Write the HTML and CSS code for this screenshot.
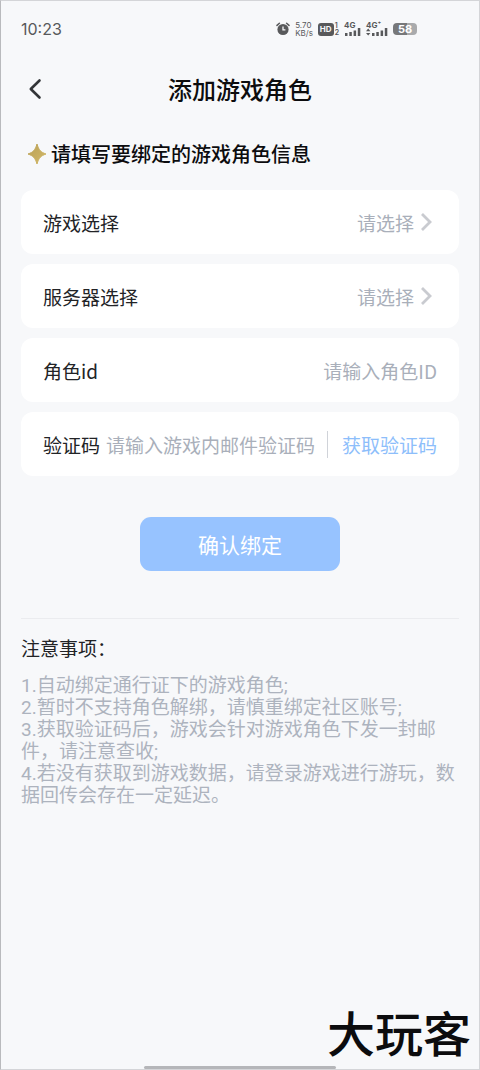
FILE: index.html
```html
<!DOCTYPE html>
<html lang="zh-CN">
<head>
<meta charset="utf-8">
<meta name="viewport" content="width=device-width, initial-scale=1">
<title>添加游戏角色</title>
<link rel="stylesheet" href="styles.css">
</head>
<body>
<div class="screen">
  <div class="status">
    <time class="clock">10:23</time>
    <div class="indicators">
      <svg class="alarm" width="14" height="14" viewBox="0 0 14 14" aria-hidden="true">
        <circle cx="7" cy="7.5" r="5.6" fill="#58595b"/>
        <path d="M1 3.4 3.4 1.2M13 3.4 10.6 1.2" stroke="#58595b" stroke-width="1.5" stroke-linecap="round"/>
        <path d="M7 4.6v3.2h2.4" fill="none" stroke="#f7f8fa" stroke-width="1.3"/>
      </svg>
      <div class="speed"><span>5.70</span><span>KB/s</span></div>
      <div class="hd"><span class="hd-badge">HD</span><span class="hd-sims"><span>1</span><span>2</span></span></div>
      <div class="signal">
        <span class="network">4G</span>
        <svg class="bars" width="17" height="8" viewBox="0 0 17 8" aria-hidden="true"><path d="M1 5h2.500v3H1zM5.300 4h2.500v4H5.300zM9.600 2.500h2.500V8H9.600zM13.800 0h2.500v8h-2.500z" fill="#58595b"/></svg>
      </div>
      <div class="signal">
        <span class="network">4G⁺</span>
        <svg class="bars" width="22" height="8" viewBox="0 0 22 8" aria-hidden="true"><path d="M0 3.200 2.200.6l2.200 2.600zM0 5l2.200 2.600L4.400 5zM6 5h2.500v3H6zM10.300 4h2.500v4h-2.500zM14.600 2.500h2.500V8h-2.500zM18.800 0h2.500v8h-2.500z" fill="#58595b"/></svg>
      </div>
      <div class="battery"><span class="level">58</span></div>
    </div>
  </div>

  <header class="header">
    <button class="back" type="button" aria-label="返回">
      <svg width="14" height="22" viewBox="0 0 14 22" aria-hidden="true"><path d="M11.500 2.500 2.800 11l8.700 8.500" fill="none" stroke="#333538" stroke-width="2.600" stroke-linecap="round" stroke-linejoin="round"/></svg>
    </button>
    <h1 class="title">添加游戏角色</h1>
  </header>

  <main class="main">
    <h2 class="subtitle">
      <svg width="20" height="22" viewBox="0 0 20 22" aria-hidden="true">
        <defs><linearGradient id="gold" x1="0" y1="0" x2="1" y2="1"><stop offset="0" stop-color="#b9a056"/><stop offset="1" stop-color="#d3b968"/></linearGradient></defs>
        <path d="M10 1C11.800 7 13.500 9 19 11 13.500 13 11.800 15 10 21 8.200 15 6.500 13 1 11 6.500 9 8.200 7 10 1z" fill="url(#gold)" stroke="url(#gold)" stroke-linejoin="round"/>
      </svg>
      <span>请填写要绑定的游戏角色信息</span>
    </h2>

    <form class="form">
      <div class="row">
        <label class="label" for="game">游戏选择</label>
        <select class="select" id="game"><option>请选择</option></select>
        <svg class="chevron" width="12" height="20" viewBox="0 0 12 20" aria-hidden="true"><path d="M2 2l8 8-8 8" fill="none" stroke="#c9cbd0" stroke-width="2.800"/></svg>
      </div>
      <div class="row">
        <label class="label" for="server">服务器选择</label>
        <select class="select" id="server"><option>请选择</option></select>
        <svg class="chevron" width="12" height="20" viewBox="0 0 12 20" aria-hidden="true"><path d="M2 2l8 8-8 8" fill="none" stroke="#c9cbd0" stroke-width="2.800"/></svg>
      </div>
      <div class="row">
        <label class="label" for="role">角色id</label>
        <input class="input input-end" id="role" type="text" placeholder="请输入角色ID">
      </div>
      <div class="row">
        <label class="label" for="code">验证码</label>
        <input class="input input-code" id="code" type="text" placeholder="请输入游戏内邮件验证码">
        <button class="get-code" type="button">获取验证码</button>
      </div>
      <button class="submit" type="submit">确认绑定</button>
    </form>

    <section class="notes">
      <h2 class="notes-title">注意事项：</h2>
      <p>1.自动绑定通行证下的游戏角色;</p>
      <p>2.暂时不支持角色解绑，请慎重绑定社区账号;</p>
      <p>3.获取验证码后，游戏会针对游戏角色下发一封邮件，请注意查收;</p>
      <p>4.若没有获取到游戏数据，请登录游戏进行游玩，数据回传会存在一定延迟。</p>
    </section>
  </main>

  <footer class="footer">
    <div class="brand">大玩客</div>
    <div class="home-bar"></div>
  </footer>
</div>
</body>
</html>
```
FILE: styles.css
```css
* {
  box-sizing: border-box;
}

body {
  margin: 0;
  background: #f7f8fa;
  color: #222326;
  font-family: "Noto Sans CJK SC", sans-serif;
}

h1, h2, p {
  margin: 0;
}

button, input, select {
  margin: 0;
  padding: 0;
  border: 0;
  background: none;
  font: inherit;
  color: inherit;
}

svg {
  display: block;
  flex: none;
}

.screen {
  display: flex;
  flex-direction: column;
  min-height: 100vh;
  border: 1px solid #d4d5d8;
  border-left-color: #b9babd;
}

.status {
  display: flex;
  align-items: center;
  justify-content: space-between;
  height: 56px;
  padding: 0 62px 0 20px;
  color: #58595b;
  font-family: Inter, sans-serif;
}

.clock {
  font-size: 16px;
}

.indicators {
  display: flex;
  align-items: center;
  gap: 5px;
}

.speed {
  display: flex;
  flex-direction: column;
  font-size: 8px;
  line-height: 8px;
}

.hd {
  display: flex;
  align-items: center;
  gap: 1px;
}

.hd-badge {
  padding: 0 2px;
  border-radius: 3px;
  background: #58595b;
  color: #f7f8fa;
  font-size: 8px;
  font-weight: 700;
  line-height: 13px;
}

.hd-sims {
  display: flex;
  flex-direction: column;
  font-size: 7px;
  font-weight: 600;
  line-height: 7px;
}

.signal {
  display: flex;
  flex-direction: column;
  height: 14px;
}

.network {
  height: 6px;
  font-size: 8px;
  font-weight: 700;
  line-height: 6px;
}

.bars {
  align-self: flex-end;
}

.battery {
  width: 24px;
  border-radius: 4px;
  background: linear-gradient(to right, #77787a 60%, #a9aaac 60%);
  color: #fff;
  font-size: 11px;
  font-weight: 700;
  line-height: 12px;
  text-align: center;
}

.header {
  display: grid;
  grid-template-columns: 28px 1fr 28px;
  align-items: center;
  height: 64px;
  padding: 0 20px;
}

.back {
  display: flex;
  justify-content: center;
  padding: 8px 0;
}

.title {
  color: #0c0c0e;
  font-size: 24px;
  font-weight: 500;
  line-height: 32px;
  text-align: center;
}

.main {
  flex: 1;
  padding: 18px 20px 0;
}

.subtitle {
  display: flex;
  align-items: center;
  gap: 4px;
  padding-left: 6px;
  color: #0c0c0e;
  font-size: 20px;
  font-weight: 500;
  line-height: 30px;
}

.form {
  display: flex;
  flex-direction: column;
  gap: 10px;
  margin-top: 21px;
}

.row {
  display: flex;
  align-items: center;
  height: 64px;
  padding: 0 22px;
  border-radius: 12px;
  background: #fff;
  font-size: 19px;
}

.label {
  flex: none;
}

.select {
  flex: 1;
  min-width: 0;
  appearance: none;
  color: #a9afba;
  text-align-last: right;
}

.chevron {
  margin: 0 5px 0 6px;
}

.input {
  flex: 1;
  min-width: 0;
  outline: 0;
}

.input::placeholder {
  color: #a9afba;
  opacity: 1;
}

.input-end {
  text-align: right;
}

.input-code {
  margin-left: 6px;
}

.get-code {
  flex: none;
  padding-left: 14px;
  border-left: 1px solid #d0d3d9;
  color: #8dbefb;
  line-height: 27px;
}

.submit {
  align-self: center;
  width: 200px;
  height: 54px;
  margin-top: 31px;
  border-radius: 11px;
  background: #97c3ff;
  color: #fff;
  font-size: 21px;
}

.notes {
  margin-top: 47px;
  padding-top: 18px;
  border-top: 1px solid #ebecef;
  color: #adb3be;
  font-family: Roboto, "Noto Sans CJK SC", sans-serif;
  font-size: 19px;
  line-height: 22px;
}

.notes-title {
  margin-bottom: 12px;
  color: #222326;
  font-size: 19px;
  font-weight: 400;
  line-height: 26px;
}

.footer {
  display: grid;
  justify-items: center;
}

.brand {
  justify-self: end;
  margin: 0 8px 4px 0;
  color: #0c0c0e;
  font-size: 48px;
  font-weight: 500;
  line-height: 62px;
}

.home-bar {
  width: 40%;
  height: 3px;
  border-radius: 2px;
  background: #b5b6b9;
}
```
